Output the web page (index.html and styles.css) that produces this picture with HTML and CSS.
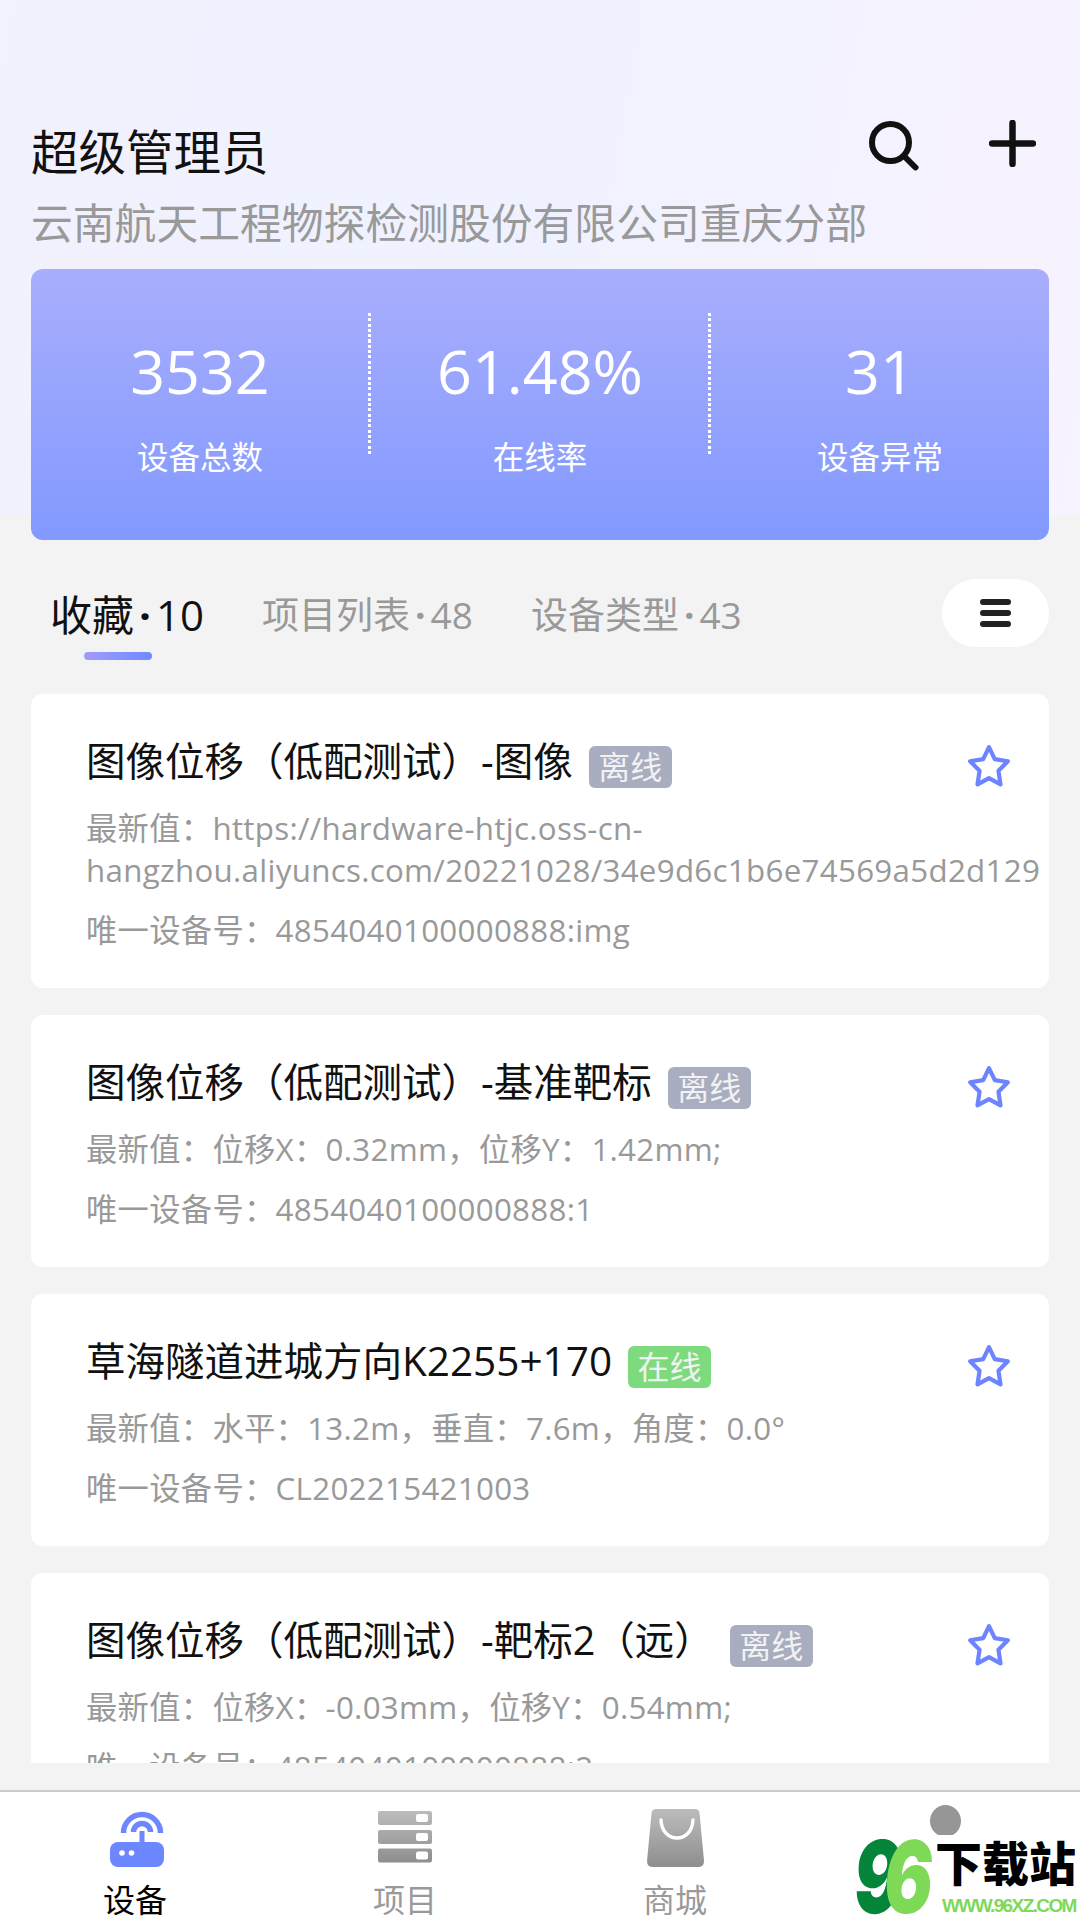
FILE: index.html
```html
<!DOCTYPE html>
<html lang="zh-CN">
<head>
  <meta charset="UTF-8">
  <title>设备</title>
  <link rel="stylesheet" href="styles.css">
</head>
<body>
<div class="page">

  <header class="top">
    <div class="top-row">
      <h1 class="user-name">超级管理员</h1>
      <div class="top-actions">
        <svg class="icon-search" viewBox="0 0 50 50"><circle cx="21.500" cy="21.500" r="18.500" fill="none" stroke="#111" stroke-width="6"/><path d="M36 36L46.500 46.500" stroke="#111" stroke-width="6" stroke-linecap="round"/></svg>
        <svg class="icon-plus" viewBox="0 0 47 47"><path d="M23.500 3V44M3 23.500H44" stroke="#111" stroke-width="6.500" stroke-linecap="round"/></svg>
      </div>
    </div>
    <p class="company">云南航天工程物探检测股份有限公司重庆分部</p>
  </header>

  <section class="stats">
    <div class="stat">
      <div class="stat-num">3532</div>
      <div class="stat-label">设备总数</div>
    </div>
    <div class="stat-sep"></div>
    <div class="stat">
      <div class="stat-num">61.48%</div>
      <div class="stat-label">在线率</div>
    </div>
    <div class="stat-sep"></div>
    <div class="stat">
      <div class="stat-num">31</div>
      <div class="stat-label">设备异常</div>
    </div>
  </section>

  <div class="tabs">
    <a class="tab active">收藏<b class="dot">·</b>10</a>
    <a class="tab">项目列表<b class="dot">·</b>48</a>
    <a class="tab">设备类型<b class="dot">·</b>43</a>
    <button class="menu-btn"><span></span><span></span><span></span></button>
  </div>

  <main class="list">
    <article class="card">
      <div class="card-head">
        <h2 class="card-title">图像位移（低配测试）-图像</h2>
        <span class="badge">离线</span>
        <svg class="star" viewBox="0 0 42 42"><path d="M21 3L26.500 14.500L39 16.500L30 25.500L32 38.500L21 32.500L10 38.500L12 25.500L3 16.500L15.500 14.500Z" fill="none" stroke="#6c84ff" stroke-width="4" stroke-linejoin="round"/></svg>
      </div>
      <p class="card-line">最新值：https://hardware-htjc.oss-cn-hangzhou.aliyuncs.com/20221028/34e9d6c1b6e74569a5d2d129</p>
      <p class="card-line">唯一设备号：4854040100000888:img</p>
    </article>

    <article class="card">
      <div class="card-head">
        <h2 class="card-title">图像位移（低配测试）-基准靶标</h2>
        <span class="badge">离线</span>
        <svg class="star" viewBox="0 0 42 42"><path d="M21 3L26.500 14.500L39 16.500L30 25.500L32 38.500L21 32.500L10 38.500L12 25.500L3 16.500L15.500 14.500Z" fill="none" stroke="#6c84ff" stroke-width="4" stroke-linejoin="round"/></svg>
      </div>
      <p class="card-line">最新值：位移X：0.32mm，位移Y：1.42mm;</p>
      <p class="card-line">唯一设备号：4854040100000888:1</p>
    </article>

    <article class="card">
      <div class="card-head">
        <h2 class="card-title">草海隧道进城方向<span class="title-code">K2255+170</span></h2>
        <span class="badge online">在线</span>
        <svg class="star" viewBox="0 0 42 42"><path d="M21 3L26.500 14.500L39 16.500L30 25.500L32 38.500L21 32.500L10 38.500L12 25.500L3 16.500L15.500 14.500Z" fill="none" stroke="#6c84ff" stroke-width="4" stroke-linejoin="round"/></svg>
      </div>
      <p class="card-line">最新值：水平：13.2m，垂直：7.6m，角度：0.0°</p>
      <p class="card-line">唯一设备号：CL202215421003</p>
    </article>

    <article class="card">
      <div class="card-head">
        <h2 class="card-title">图像位移（低配测试）-靶标2（远）</h2>
        <span class="badge">离线</span>
        <svg class="star" viewBox="0 0 42 42"><path d="M21 3L26.500 14.500L39 16.500L30 25.500L32 38.500L21 32.500L10 38.500L12 25.500L3 16.500L15.500 14.500Z" fill="none" stroke="#6c84ff" stroke-width="4" stroke-linejoin="round"/></svg>
      </div>
      <p class="card-line">最新值：位移X：-0.03mm，位移Y：0.54mm;</p>
      <p class="card-line">唯一设备号：4854040100000888:2</p>
    </article>
  </main>

  <nav class="bottom-nav">
    <a class="nav-item active">
      <svg class="nav-icon" viewBox="0 0 60 64">
        <rect x="5" y="38" width="54" height="25" rx="8" fill="#6c87ff"/>
        <rect x="34.500" y="27" width="5" height="12" fill="#6c87ff"/>
        <path d="M18.500 29A18.500 18.500 0 0 1 55.500 29M28.500 28A8.500 8.500 0 0 1 45.500 28" fill="none" stroke="#6c87ff" stroke-width="5.500"/>
        <circle cx="17" cy="49" r="2.800" fill="#fff"/>
        <circle cx="26.500" cy="49" r="2.800" fill="#fff"/>
      </svg>
      <span>设备</span>
    </a>
    <a class="nav-item">
      <svg class="nav-icon" viewBox="0 0 60 64">
        <defs><linearGradient id="greyA" x1="0" y1="0" x2="0" y2="1"><stop offset="0" stop-color="#bcbcbc"/><stop offset="1" stop-color="#8e8e8e"/></linearGradient></defs>
        <path d="M5 7H55A2 2 0 0 1 57 9V19A2 2 0 0 1 55 21H5A2 2 0 0 1 3 19V9A2 2 0 0 1 5 7ZM5 26H55A2 2 0 0 1 57 28V38A2 2 0 0 1 55 40H5A2 2 0 0 1 3 38V28A2 2 0 0 1 5 26ZM5 44.500H55A2 2 0 0 1 57 46.500V56.500A2 2 0 0 1 55 58.500H5A2 2 0 0 1 3 56.500V46.500A2 2 0 0 1 5 44.500Z" fill="url(#greyA)"/>
        <rect x="41" y="10" width="12" height="8" rx="2" fill="#fff"/>
        <rect x="41" y="29" width="12" height="8" rx="2" fill="#fff"/>
        <rect x="41" y="47.500" width="12" height="8" rx="2" fill="#fff"/>
      </svg>
      <span>项目</span>
    </a>
    <a class="nav-item">
      <svg class="nav-icon" viewBox="0 0 60 64">
        <defs><linearGradient id="greyB" x1="0" y1="0" x2="0" y2="1"><stop offset="0" stop-color="#bcbcbc"/><stop offset="1" stop-color="#8e8e8e"/></linearGradient></defs>
        <path d="M11 5H50Q54 5 54.500 9L59 57Q59 63 53 63H8Q2 63 2 57L6.500 9Q7 5 11 5Z" fill="url(#greyB)"/>
        <path d="M16 16C17 40 47 40 48 16" fill="none" stroke="#fff" stroke-width="3.500" stroke-linecap="round"/>
      </svg>
      <span>商城</span>
    </a>
    <a class="nav-item">
      <svg class="nav-icon" viewBox="0 0 60 64">
        <ellipse cx="30.500" cy="17" rx="15.500" ry="16" fill="#969696"/>
      </svg>
    </a>
    <div class="watermark">
      <div class="wm-num"><span class="wm-nine">9</span><span class="wm-six">6</span></div>
      <div class="wm-text">
        <div class="wm-title">下载站</div>
        <div class="wm-url">WWW.96XZ.COM</div>
      </div>
    </div>
  </nav>

</div>
</body>
</html>
```

FILE: styles.css
```css
* {
  box-sizing: border-box;
}
body {
  margin: 0;
  font-family: "Open Sans", "Noto Sans CJK SC", sans-serif;
  color: #111;
}
.page {
  width: 1080px;
  height: 1920px;
  overflow: hidden;
  display: flex;
  flex-direction: column;
  background-color: #f3f3f3;
  background-image: linear-gradient(100deg, #f2f1fe 0%, #eff2fe 50%, #f8f3fe 100%);
  background-size: 100% 515px;
  background-repeat: no-repeat;
}

/* Top header */
.top {
  padding: 120px 31px 0;
}
.top-row {
  display: flex;
  justify-content: space-between;
  align-items: flex-start;
}
.user-name {
  margin: 0;
  font-size: 47.500px;
  font-weight: 400;
  line-height: 64px;
}
.top-actions {
  display: flex;
  gap: 70px;
  padding: 1px 13px 0 0;
}
.icon-search {
  width: 50px;
  height: 50px;
}
.icon-plus {
  width: 47px;
  height: 47px;
  margin-top: -1px;
}
.company {
  margin: 11px 0 0;
  font-size: 41.800px;
  line-height: 56px;
  color: #999;
}

/* Stats card */
.stats {
  margin: 18px 31px 0;
  height: 271px;
  flex-shrink: 0;
  display: flex;
  align-items: flex-start;
  padding-top: 44px;
  border-radius: 12px;
  background: linear-gradient(180deg, #a9aefc 0%, #8299ff 100%);
  color: #fff;
  text-align: center;
}
.stat {
  flex: 1;
  padding-top: 18px;
}
.stat-num {
  font-size: 61px;
  line-height: 80px;
}
.stat-label {
  margin-top: 24px;
  font-size: 31.500px;
  line-height: 44px;
}
.stat-sep {
  width: 3px;
  height: 141px;
  margin-left: -1px;
  background: repeating-linear-gradient(180deg, #fff 0, #fff 3px, transparent 3px, transparent 5.300px);
}

/* Tabs */
.tabs {
  margin: 39px 31px 0 0;
  height: 68px;
  flex-shrink: 0;
  display: flex;
  align-items: flex-start;
  padding-left: 50px;
  gap: 58px;
  font-size: 37px;
  color: #999;
}
.tab {
  position: relative;
  white-space: nowrap;
  line-height: 72px;
}
.tab.active {
  font-size: 42px;
  color: #111;
}
.tab.active::after {
  content: "";
  position: absolute;
  left: 34px;
  top: 73px;
  width: 68px;
  height: 8px;
  border-radius: 4px;
  background: linear-gradient(90deg, #a49bfb, #6f8bff);
}
.dot {
  margin: 0 5px;
  font-weight: 700;
}
.menu-btn {
  margin-left: auto;
  width: 107px;
  height: 68px;
  padding: 0;
  border: 0;
  border-radius: 34px;
  background: #fff;
  display: flex;
  flex-direction: column;
  align-items: center;
  justify-content: center;
  gap: 5px;
}
.menu-btn span {
  width: 31px;
  height: 6px;
  border-radius: 3px;
  background: #222;
}

/* Device cards */
.list {
  margin: 47px 31px 27px;
  flex: 1;
  min-height: 0;
  overflow: hidden;
}
.card {
  margin-bottom: 27px;
  padding: 39px 0 37px 55px;
  border-radius: 12px;
  background: #fff;
  overflow: hidden;
}
.card-head {
  position: relative;
  display: flex;
  align-items: center;
  height: 56px;
}
.card-title {
  margin: 0;
  font-size: 39.500px;
  font-weight: 400;
  line-height: 56px;
}
.title-code {
  font-size: 40.500px;
}
.badge {
  margin: 12px 0 0 16px;
  width: 83px;
  height: 42px;
  border-radius: 6px;
  background: #a9adc0;
  color: #f2f2f2;
  font-size: 32px;
  line-height: 42px;
  text-align: center;
}
.badge.online {
  background: #7ddb7e;
}
.star {
  position: absolute;
  right: 38px;
  top: 11px;
  width: 44px;
  height: 44px;
}
.card-line {
  margin: 18px 0 0;
  font-size: 31.300px;
  letter-spacing: 0.3px;
  line-height: 42px;
  color: #999;
}

/* Bottom navigation */
.bottom-nav {
  position: relative;
  height: 130px;
  flex-shrink: 0;
  display: flex;
  border-top: 2px solid #ccc;
  background: #fff;
  overflow: hidden;
}
.nav-item {
  flex: 1;
  display: flex;
  flex-direction: column;
  align-items: center;
  padding-top: 12px;
  font-size: 32px;
  line-height: 40px;
  color: #999;
}
.nav-item.active {
  color: #000;
}
.nav-icon {
  width: 60px;
  height: 64px;
  margin-bottom: 12px;
  flex-shrink: 0;
}

/* Watermark lies over the last nav item */
.watermark {
  position: absolute;
  left: 855px;
  top: 43px;
  width: 225px;
  height: 85px;
  display: flex;
  background: #fff;
  font-family: "Liberation Sans", "Noto Sans CJK SC", sans-serif;
}
.wm-num {
  width: 80px;
  height: 85px;
  flex-shrink: 0;
  font-family: Inter, "Liberation Sans", sans-serif;
  font-size: 100px;
  font-weight: 900;
  line-height: 84px;
  letter-spacing: -26px;
  white-space: nowrap;
  transform: scaleX(0.72) skewX(-8deg);
  transform-origin: left center;
}
.wm-nine {
  color: #04853a;
}
.wm-six {
  color: #7ed957;
}
.wm-title {
  margin-top: 4px;
  font-size: 47px;
  font-weight: 900;
  line-height: 52px;
  color: #000;
}
.wm-url {
  margin: 5px 0 0 7px;
  font-size: 19px;
  font-weight: 700;
  letter-spacing: -1.600px;
  line-height: 20px;
  color: #7ed957;
  white-space: nowrap;
}
```
